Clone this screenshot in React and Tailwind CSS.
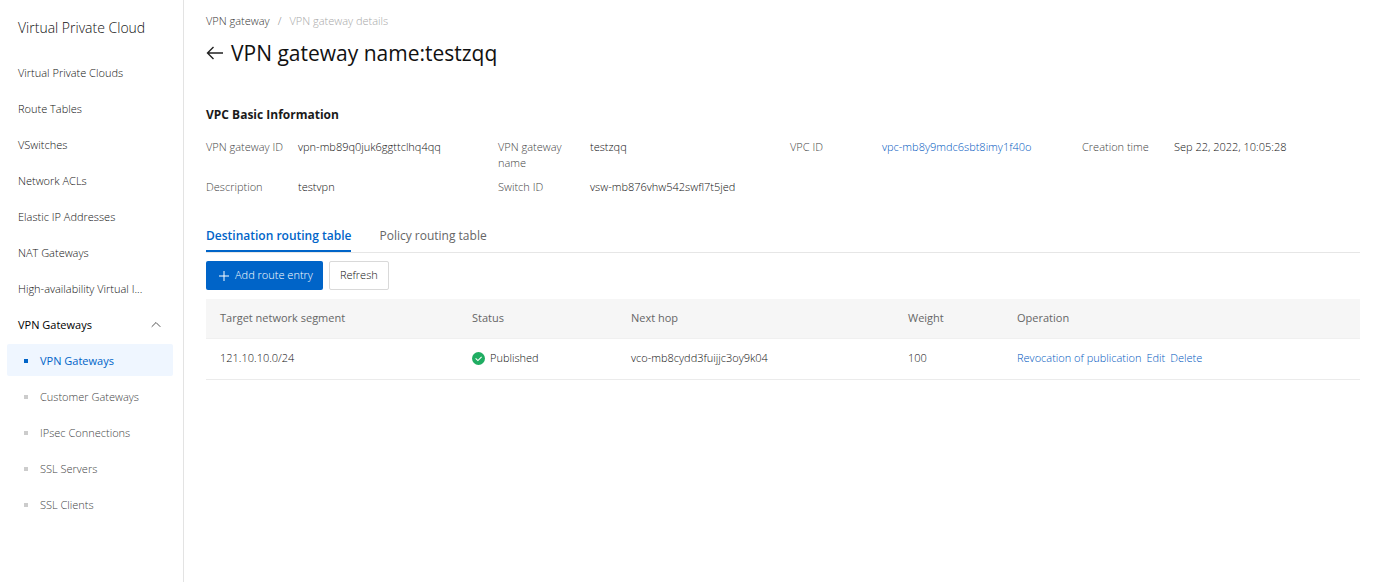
import React from 'react';

const menuItems = [
  'Virtual Private Clouds',
  'Route Tables',
  'VSwitches',
  'Network ACLs',
  'Elastic IP Addresses',
  'NAT Gateways',
  'High-availability Virtual I...',
];

const vpnItems = ['VPN Gateways', 'Customer Gateways', 'IPsec Connections', 'SSL Servers', 'SSL Clients'];

const info = [
  { label: 'VPN gateway ID', value: 'vpn-mb89q0juk6ggttclhq4qq' },
  { label: 'VPN gateway name', value: 'testzqq' },
  { label: 'VPC ID', value: 'vpc-mb8y9mdc6sbt8imy1f40o', link: true },
  { label: 'Creation time', value: 'Sep 22, 2022, 10:05:28' },
  { label: 'Description', value: 'testvpn' },
  { label: 'Switch ID', value: 'vsw-mb876vhw542swfl7t5jed' },
];

const routes = [
  { segment: '121.10.10.0/24', status: 'Published', nextHop: 'vco-mb8cydd3fuijjc3oy9k04', weight: 100 },
];

const Sidebar = () => (
  <aside className="w-46 shrink-0 border-r border-[#e3e3e3] pl-[7px] pr-2.5">
    <h2 className="h-14 pl-[11px] text-sm leading-[55px] text-[#111]">Virtual Private Cloud</h2>
    <nav className="flex flex-col gap-1 text-[#111]">
      {menuItems.map((item) => (
        <a key={item} href="#" className="flex h-8 items-center pt-0.5 pl-[11px] whitespace-nowrap">{item}</a>
      ))}
      <button type="button" className="flex h-8 items-center justify-between pt-0.5 pl-[11px] pr-3 font-medium text-black">
        VPN Gateways
        <svg className="h-2.5 w-2.5" viewBox="0 0 10 10" fill="none" stroke="#555">
          <path d="M0.7 6.8L5 2.5l4.3 4.3" />
        </svg>
      </button>
      {vpnItems.map((item, index) => (
        <a
          key={item}
          href="#"
          className={`flex h-8 items-center gap-3 rounded-xs pt-0.5 pl-[17px] ${
            index === 0 ? 'bg-[#eff6ff] font-medium text-[#0064c8]' : 'text-[#444]'
          }`}
        >
          <span className={`h-1 w-1 ${index === 0 ? 'bg-[#0064c8]' : 'bg-[#ccc]'}`} />
          {item}
        </a>
      ))}
    </nav>
  </aside>
);

const BasicInfo = () => (
  <section>
    <h2 className="text-xs leading-5 font-bold text-[#1a1a1a]">VPC Basic Information</h2>
    <dl className="mt-3.5 grid grid-cols-4 gap-x-3.5 gap-y-2 leading-4">
      {info.map((item) => (
        <div key={item.label} className="flex">
          <dt className="w-[92px] shrink-0 pr-2 text-[#444]">{item.label}</dt>
          <dd className="text-[#111]">
            {item.link ? <a href="#" className="text-[#0058c0]">{item.value}</a> : item.value}
          </dd>
        </div>
      ))}
    </dl>
  </section>
);

const StatusIcon = () => (
  <svg className="h-[13px] w-[13px]" viewBox="0 0 13 13" fill="none">
    <circle cx="6.5" cy="6.5" r="6.5" fill="#1fad62" />
    <path d="M3.6 6.4l2.3 2.2 3.7-3.7" stroke="#fff" strokeWidth="1.1" />
  </svg>
);

const RouteTable = () => (
  <table className="mt-[9px] w-full table-fixed text-left">
    <thead className="bg-[#f6f6f6] text-[#666]">
      <tr className="h-[39px] border-b border-[#f0f0f0]">
        <th className="w-[252px] px-3.5 font-medium">Target network segment</th>
        <th className="w-[159px] px-3.5 font-medium">Status</th>
        <th className="w-[277px] px-3.5 font-medium">Next hop</th>
        <th className="w-[109px] px-3.5 font-medium">Weight</th>
        <th className="px-3.5 font-medium">Operation</th>
      </tr>
    </thead>
    <tbody className="text-[#111]">
      {routes.map((route) => (
        <tr key={route.segment} className="h-[41px] border-b border-[#ebebeb]">
          <td className="px-3.5">{route.segment}</td>
          <td className="px-3.5">
            <div className="flex items-center gap-[5px]">
              <StatusIcon />
              {route.status}
            </div>
          </td>
          <td className="px-3.5">{route.nextHop}</td>
          <td className="px-3.5">{route.weight}</td>
          <td className="px-3.5">
            <div className="flex gap-[5px] text-[#0058c0]">
              <a href="#">Revocation of publication</a>
              <a href="#">Edit</a>
              <a href="#">Delete</a>
            </div>
          </td>
        </tr>
      ))}
    </tbody>
  </table>
);

export default function App() {
  return (
    <div className="flex min-h-screen bg-white font-['Open_Sans','Noto_Sans',sans-serif] text-[11px] font-light">
      <Sidebar />
      <main className="min-w-0 flex-1 pt-[13px] pr-[21px] pl-[22px]">
        <nav className="flex gap-2 leading-4 text-[#333]">
          <a href="#">VPN gateway</a>
          <span className="text-[#888]">/</span>
          <span className="text-[#a8a8a8]">VPN gateway details</span>
        </nav>
        <div className="mt-2 flex items-center gap-2">
          <button type="button" aria-label="Back">
            <svg className="h-[17px] w-[17px]" viewBox="0 0 17 17" fill="none" stroke="#222" strokeWidth="1.4">
              <path d="M17 8H1.5M7.5 2L1.5 8l6 6" />
            </svg>
          </button>
          <h1 className="text-[21px] leading-8 font-medium text-[#111]">VPN gateway name:testzqq</h1>
        </div>
        <div className="mt-9">
          <BasicInfo />
        </div>
        <div className="mt-[25px] flex gap-7 border-b border-[#e6e6e6] text-xs">
          <button type="button" className="-mb-px h-8 border-b-2 border-[#0064c8] pt-0.5 font-semibold text-[#0064c8]">
            Destination routing table
          </button>
          <button type="button" className="h-8 font-normal text-[#666]">Policy routing table</button>
        </div>
        <div className="mt-2 flex gap-1.5">
          <button type="button" className="flex h-[29px] items-center gap-1.5 rounded-xs bg-[#0064c8] pr-2.5 pl-[13px] text-white">
            <svg className="h-2.5 w-2.5" viewBox="0 0 10 10" stroke="#fff">
              <path d="M5 0v10M0 5h10" />
            </svg>
            Add route entry
          </button>
          <button type="button" className="h-[29px] rounded-xs border border-[#d9d9d9] px-2.5 text-[#111]">
            Refresh
          </button>
        </div>
        <RouteTable />
      </main>
    </div>
  );
}
